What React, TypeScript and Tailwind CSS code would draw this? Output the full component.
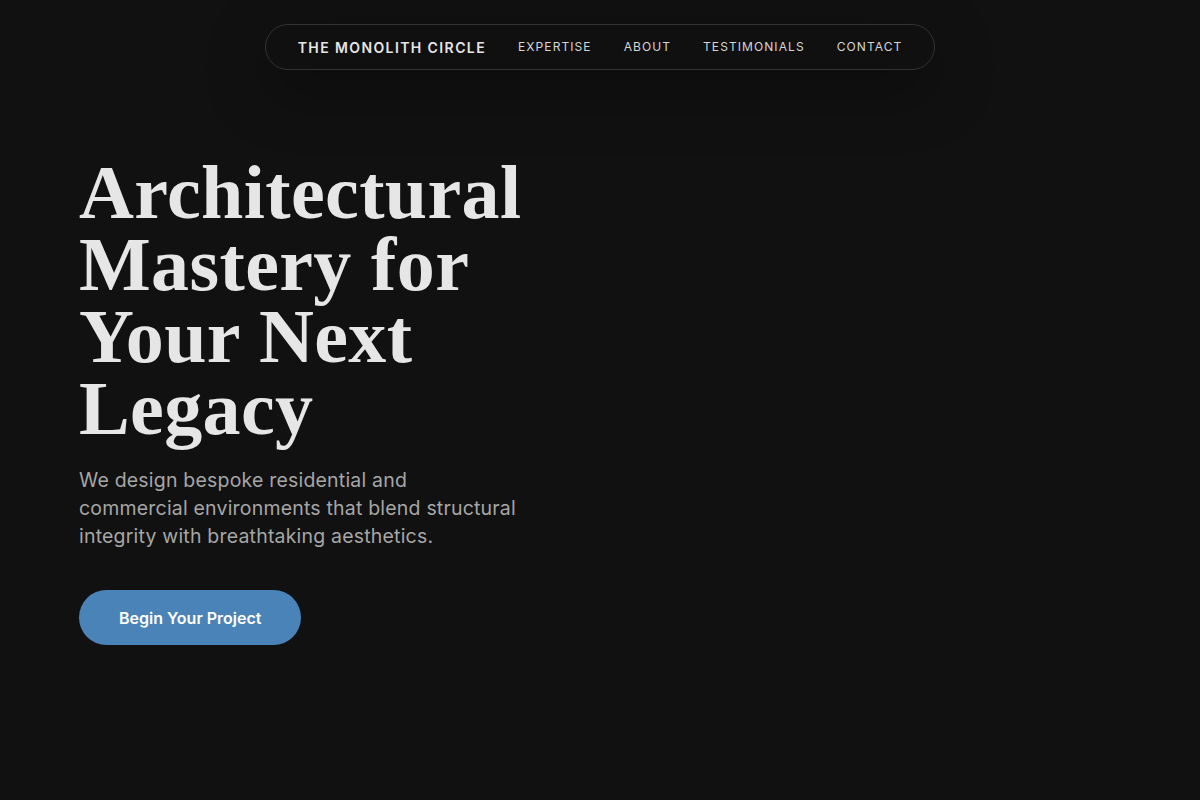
import React from "react";

export default function App() {
  return (
    <div className="min-h-[800px] w-full bg-[#111111] font-['Inter',sans-serif] text-[#e8e8e8]">
      <div className="flex justify-center pt-6">
        <nav className="flex h-[46px] items-center gap-8 rounded-full border border-[#333333] bg-[#101010] pl-8 pr-8 shadow-[0_20px_60px_rgba(0,0,0,0.35)]">
          <span className="text-[14px] font-semibold tracking-[0.1em] text-[#e6e6e6]">THE MONOLITH CIRCLE</span>
          <a className="text-[12px] tracking-[0.09em] text-[#d6d6d6]">EXPERTISE</a>
          <a className="text-[12px] tracking-[0.09em] text-[#d6d6d6]">ABOUT</a>
          <a className="text-[12px] tracking-[0.09em] text-[#d6d6d6]">TESTIMONIALS</a>
          <a className="text-[12px] tracking-[0.09em] text-[#d6d6d6]">CONTACT</a>
        </nav>
      </div>
      <main className="px-[79px] pt-[86px]">
        <div className="max-w-[470px]">
          <h1 className="font-['Liberation_Serif',serif] text-[76px] font-bold leading-[72px] tracking-[0.005em] text-[#e6e6e6]">
            Architectural Mastery for Your Next Legacy
          </h1>
          <p className="mt-[22px] text-[19.5px] leading-[28px] tracking-[0.01em] text-[#a6a6a6]">
            We design bespoke residential and
            <br />
            commercial environments that blend structural
            <br />
            integrity with breathtaking aesthetics.
          </p>
          <button className="mt-[40px] h-[55px] rounded-full bg-[#4a83b8] px-10 text-[16px] font-semibold text-white">
            Begin Your Project
          </button>
        </div>
      </main>
    </div>
  );
}
